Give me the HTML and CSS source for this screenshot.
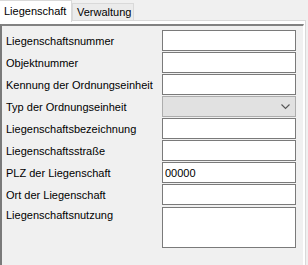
FILE: index.html
```html
<!DOCTYPE html>
<html lang="de">
<head>
    <meta charset="UTF-8">
    <title>Liegenschaft</title>
    <link rel="stylesheet" href="styles.css">
</head>
<body>
    <div class="tabstrip">
        <div class="tab active">Liegenschaft</div>
        <div class="tab">Verwaltung</div>
    </div>
    <div class="tab-page">
        <div class="panel">
            <div class="form-grid">
                <label>Liegenschaftsnummer</label>
                <input type="text" class="field">
                <label>Objektnummer</label>
                <input type="text" class="field">
                <label>Kennung der Ordnungseinheit</label>
                <input type="text" class="field">
                <label>Typ der Ordnungseinheit</label>
                <div class="combo">
                    <svg width="9" height="6" viewBox="0 0 9 6"><polyline points="0.5,0.5 4.5,4.5 8.5,0.5" fill="none" stroke="#555" stroke-width="1.1"/></svg>
                </div>
                <label>Liegenschaftsbezeichnung</label>
                <input type="text" class="field">
                <label>Liegenschaftsstraße</label>
                <input type="text" class="field">
                <label>PLZ der Liegenschaft</label>
                <input type="text" class="field" value="00000">
                <label>Ort der Liegenschaft</label>
                <input type="text" class="field">
                <label class="top">Liegenschaftsnutzung</label>
                <textarea class="field memo"></textarea>
            </div>
        </div>
    </div>
</body>
</html>
```

FILE: styles.css
```css
/* Global */
body {
    margin: 0;
    background-color: #f0f0f0;
    font-family: 'Liberation Sans', Arial, sans-serif;
    font-size: 11px;
    color: #000;
    width: 308px;
    height: 265px;
    overflow: hidden;
}

/* Tabs */
.tabstrip {
    display: flex;
    align-items: flex-end;
    height: 20px;
}

.tab {
    box-sizing: border-box;
    height: 17px;
    width: 62px;
    padding-left: 4px;
    line-height: 16px;
    background-color: #ebebeb;
    border: 1px solid #d9d9d9;
    border-bottom: none;
}

.tab.active {
    width: 72px;
    height: 22px;
    margin-bottom: -2px;
    padding-left: 4px;
    line-height: 20px;
    background-color: #fff;
    border-left: none;
    z-index: 1;
}

/* Page */
.tab-page {
    width: 306px;
    height: 245px;
    box-sizing: border-box;
    background-color: #fff;
    border-top: 1px solid #d9d9d9;
    border-right: 1px solid #d9d9d9;
    padding-top: 3px;
    padding-right: 1px;
}

.panel {
    height: 100%;
    background-color: #f0f0f0;
    border-top: 2px solid #828282;
    border-left: 2px solid #7a7a7a;
    border-right: 1px solid #fff;
    padding: 4px 7px 0 4px;
}

.form-grid {
    display: grid;
    grid-template-columns: minmax(0, 1fr) 134px;
    grid-auto-rows: 21px;
    row-gap: 1px;
    align-items: center;
}

.form-grid label {
    white-space: nowrap;
}

.form-grid label.top {
    align-self: start;
    padding-top: 3px;
}

/* Inputs */
.field {
    box-sizing: border-box;
    width: 134px;
    height: 21px;
    margin: 0;
    padding: 0 2px;
    border: 1px solid #7a7a7a;
    background-color: #fff;
    font-family: inherit;
    font-size: 11px;
    color: #000;
    outline: none;
}

.memo {
    height: 41px;
    grid-row: span 2;
    resize: none;
}

.combo {
    box-sizing: border-box;
    height: 21px;
    background-color: #e1e1e1;
    border: 1px solid #adadad;
    display: flex;
    align-items: center;
    justify-content: flex-end;
    padding-right: 5px;
}
```
